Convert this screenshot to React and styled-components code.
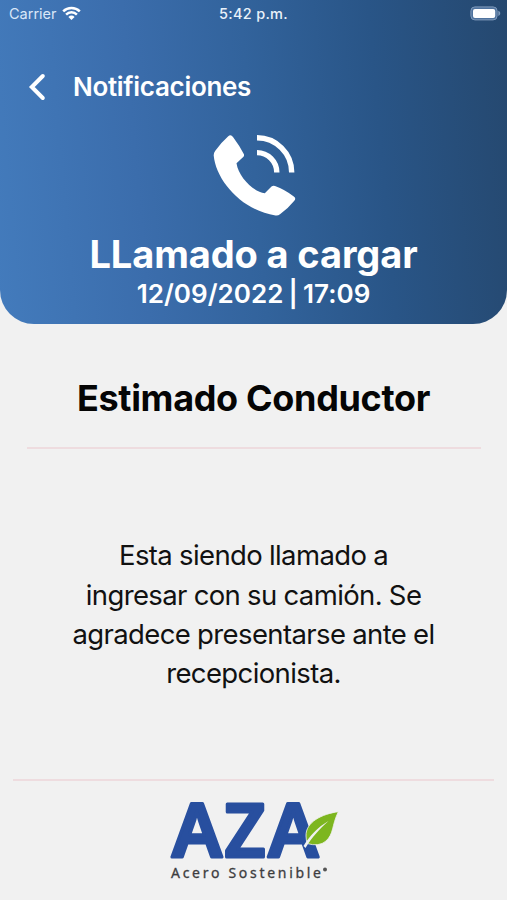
import React from 'react';
import styled, { createGlobalStyle } from 'styled-components';

const GlobalStyle = createGlobalStyle`
  * { box-sizing: border-box; }
  body {
    margin: 0;
    background: #f1f1f1;
    font-family: Inter, "Liberation Sans", sans-serif;
  }
`;

const Screen = styled.main`
  display: flex;
  flex-direction: column;
  height: 900px;
  overflow: hidden;
  background: #f1f1f1;
`;

const Hero = styled.header`
  display: flex;
  flex-direction: column;
  height: 324px;
  flex: none;
  color: #fff;
  border-radius: 0 0 34px 34px;
  background: linear-gradient(85deg, #437bbc 0%, #3b6dac 28%, #32639c 50%, #295587 74%, #25486f 100%);
`;

const StatusBar = styled.div`
  display: grid;
  grid-template-columns: 1fr auto 1fr;
  align-items: center;
  height: 27px;
  padding: 0 6px 0 9px;
  font-size: 14.5px;
  line-height: 18px;
`;

const Carrier = styled.span`
  display: flex;
  align-items: center;
  gap: 5px;
  color: #d9e7f8;
`;

const Clock = styled.span`
  margin-right: 3px;
  font-weight: 500;
  letter-spacing: 0.28px;
  color: #e9f1fa;
`;

const BatterySlot = styled.span`
  display: flex;
  justify-content: flex-end;
`;

const NavBar = styled.nav`
  display: flex;
  align-items: center;
  gap: 26px;
  height: 40px;
  margin-top: 40px;
  padding-left: 27px;
`;

const BackButton = styled.button`
  display: flex;
  padding: 0;
  border: 0;
  color: #fff;
  background: none;
`;

const NavTitle = styled.h1`
  margin: 0;
  font-size: 26px;
  line-height: 32px;
  font-weight: 600;
  letter-spacing: -0.3px;
`;

const CallSummary = styled.section`
  display: flex;
  flex-direction: column;
  align-items: center;
  padding-top: 25px;
`;

const CallTitle = styled.h2`
  margin: 15px 0 1px;
  font-size: 38px;
  line-height: 46px;
  font-weight: 650;
  letter-spacing: -0.12px;
`;

const CallDate = styled.p`
  margin: 0;
  font-size: 26px;
  line-height: 32px;
  font-weight: 600;
  letter-spacing: 0.05px;
  word-spacing: -1.6px;
`;

const Greeting = styled.h2`
  margin: 51px 0 0;
  color: #050505;
  font-size: 36px;
  line-height: 46px;
  font-weight: 650;
  letter-spacing: -0.33px;
  text-align: center;
`;

const Divider = styled.hr`
  flex: none;
  width: ${(p) => p.$width}px;
  height: 2px;
  margin: ${(p) => p.$top}px auto 0;
  border: 0;
  background: #eedcdf;
`;

const Message = styled.p`
  width: 390px;
  margin: 87.4px auto 0;
  color: #111;
  font-size: 27.5px;
  line-height: 39.2px;
  letter-spacing: -0.61px;
  word-spacing: -0.3px;
  text-align: center;
`;

const Footer = styled.footer`
  display: flex;
  justify-content: center;
  padding-top: 10px;
`;

const Logo = styled.svg`
  overflow: visible;
`;

const LINES = [
  'Esta siendo llamado a',
  'ingresar con su camión. Se',
  'agradece presentarse ante el',
  'recepcionista.',
];

function WifiIcon() {
  return (
    <svg width="19" height="15" viewBox="0 0 19 15" fill="none" stroke="#fff" strokeWidth="2.5">
      <path d="M1.2 5.3a11.8 11.8 0 0 1 16.6 0" />
      <path d="M4.1 8.600a7.6 7.6 0 0 1 10.8 0" />
      <path d="M9.5 14 6.400 10.900a4.4 4.4 0 0 1 6.2 0z" fill="#fff" stroke="none" />
    </svg>
  );
}

function BatteryIcon() {
  return (
    <svg width="31" height="15" viewBox="0 0 31 15">
      <rect x="0.9" y="0.9" width="26.2" height="13" rx="4" fill="#4f739e" stroke="#7f9abb" />
      <rect x="3" y="2.9" width="22.2" height="9" rx="2" fill="#fff" />
      <path d="M28.3 4.8c2.6 1 2.6 4.2 0 5.2z" fill="#7f9abb" />
    </svg>
  );
}

function BackIcon() {
  return (
    <svg width="20" height="28" viewBox="0 0 20 28" fill="none" stroke="currentColor" strokeWidth="4" strokeLinecap="round" strokeLinejoin="miter">
      <path d="M15.8 3 4.8 14l11 11" />
    </svg>
  );
}

function PhoneIcon() {
  return (
    <svg width="84" height="84" viewBox="0 0 84 84" fill="#fff">
      <path d="M16 4.400Q18.800 1.700 21 4.900Q27.500 13.500 31.800 22Q32.600 23.600 31.200 25L24.500 31.300C26.500 45 41 59.500 52.800 61.300L59.500 54.600Q61 53.200 63 54Q73 57.600 81.800 64.500Q84.400 66.300 82.300 68.700Q76 76.500 68 82.300Q66 83.900 63.500 83.500C30 78.500 4 48.500 1.700 23.500Q1.600 21 3.100 19Q9 10.500 16 4.400z" />
      <path d="M45 5.800c19 0 34.700 15.400 34.700 34.700M45 20.600c10.800 0 19.800 8.800 19.800 19.900" fill="none" stroke="#fff" strokeWidth="5.400" />
    </svg>
  );
}

function BrandLogo() {
  return (
    <Logo width="176" height="90" viewBox="0 0 176 90" role="img" aria-label="AZA Acero Sostenible">
      <g fill="#284f9f" stroke="#284f9f" strokeWidth="3.200" strokeLinejoin="round" fontFamily="'Noto Sans', sans-serif" fontWeight="600" fontSize="74">
        <text x="6" y="66.300" textLength="50" lengthAdjust="spacingAndGlyphs">A</text>
        <text x="58.400" y="66.300" textLength="41" lengthAdjust="spacingAndGlyphs">Z</text>
        <text x="102.300" y="66.300" textLength="50" lengthAdjust="spacingAndGlyphs">A</text>
      </g>
      <path d="M172.300 20.700C156 23 139.500 31 140 45Q140.200 49 141 52.500Q153 56 160 50C168 42.500 165.500 35 172.300 20.700z" fill="#7db61f" stroke="#f1f1f1" strokeWidth="0.800" />
      <path d="M137.500 55C143 45.500 152 36 162.500 30C153.500 38 146 46 139.500 57z" fill="#f1f1f1" />
      <text x="5" y="86.800" fill="#3d3d3f" stroke="#3d3d3f" strokeWidth="0.300" fontFamily="'Noto Sans', sans-serif" fontWeight="400" fontSize="14" textLength="150">Acero Sostenible</text>
      <circle cx="159" cy="78.500" r="2" fill="#555" />
    </Logo>
  );
}

export default function App() {
  return (
    <>
      <GlobalStyle />
      <Screen>
        <Hero>
          <StatusBar>
            <Carrier>Carrier <WifiIcon /></Carrier>
            <Clock>5:42 p.m.</Clock>
            <BatterySlot><BatteryIcon /></BatterySlot>
          </StatusBar>
          <NavBar>
            <BackButton aria-label="Volver"><BackIcon /></BackButton>
            <NavTitle>Notificaciones</NavTitle>
          </NavBar>
          <CallSummary>
            <PhoneIcon />
            <CallTitle>LLamado a cargar</CallTitle>
            <CallDate>12/09/2022 | 17:09</CallDate>
          </CallSummary>
        </Hero>
        <Greeting>Estimado Conductor</Greeting>
        <Divider $width={454} $top={26} />
        <Message>
          {LINES.map((line, i) => (
            <React.Fragment key={line}>{i > 0 && <br />}{line}</React.Fragment>
          ))}
        </Message>
        <Divider $width={481} $top={85.8} />
        <Footer><BrandLogo /></Footer>
      </Screen>
    </>
  );
}
